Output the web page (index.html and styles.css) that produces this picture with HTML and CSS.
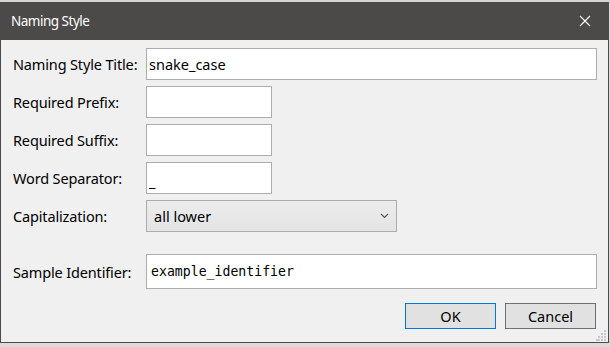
FILE: index.html
```html
<!DOCTYPE html>
<html>
<head>
<meta charset="utf-8">
<link rel="stylesheet" href="styles.css">
</head>
<body>
<div class="backdrop-top"></div>
<div class="dialog">
  <div class="titlebar">
    <span class="title">Naming Style</span>
    <svg class="close" width="12" height="12" viewBox="0 0 12 12"><path d="M1 1L11 11M11 1L1 11" stroke="#ffffff" stroke-width="1.1" fill="none"/></svg>
  </div>
  <div class="body">
    <div class="form">
      <label class="lbl">Naming Style Title:</label>
      <div class="field wide">snake_case</div>
      <label class="lbl">Required Prefix:</label>
      <div class="field short"></div>
      <label class="lbl">Required Suffix:</label>
      <div class="field short"></div>
      <label class="lbl">Word Separator:</label>
      <div class="field short sep">_</div>
      <label class="lbl">Capitalization:</label>
      <div class="combo"><span>all lower</span>
        <svg width="9" height="6" viewBox="0 0 9 6"><path d="M1 1L4.5 4.5L8 1" stroke="#555" stroke-width="1.1" fill="none"/></svg>
      </div>
    </div>
    <div class="form sample-row">
      <label class="lbl">Sample Identifier:</label>
      <div class="field wide mono">example_identifier</div>
    </div>
    <div class="buttons">
      <button class="btn default">OK</button>
      <button class="btn">Cancel</button>
    </div>
    <svg class="grip" width="11" height="11" viewBox="0 0 11 11">
      <g fill="#c8c8d0">
        <rect x="8" y="0" width="2" height="2"/>
        <rect x="5" y="3" width="2" height="2"/><rect x="8" y="3" width="2" height="2"/>
        <rect x="2" y="6" width="2" height="2"/><rect x="5" y="6" width="2" height="2"/><rect x="8" y="6" width="2" height="2"/>
        <rect x="0" y="9" width="2" height="2"/><rect x="2" y="9" width="2" height="2"/><rect x="5" y="9" width="2" height="2"/><rect x="8" y="9" width="2" height="2"/>
      </g>
    </svg>
  </div>
</div>
<div class="backdrop-bottom"></div>
</body>
</html>
```
FILE: styles.css
```css
html, body {
  margin: 0;
  padding: 0;
  width: 610px;
  height: 347px;
  overflow: hidden;
  background: #d9d9d9;
  font-family: "Noto Sans", "Open Sans", sans-serif;
}
.backdrop-top {
  height: 2px;
  background: #d4d4d4;
}
.dialog {
  width: 607px;
  border: 1px solid #4b4a48;
  border-top: none;
  background: #f0f0f0;
}
.titlebar {
  height: 38px;
  background: #4b4a48;
  display: flex;
  align-items: center;
  justify-content: space-between;
  padding: 0 17px 0 10px;
  color: #ffffff;
}
.title {
  font-size: 13.5px;
  letter-spacing: -0.5px;
}
.close {
  display: block;
}
.body {
  position: relative;
  height: 302px;
  padding: 8px 11px 0 12px;
  box-sizing: border-box;
}
.form {
  display: grid;
  grid-template-columns: 133px auto;
  row-gap: 6px;
  align-items: center;
  justify-items: start;
}
.lbl {
  font-size: 14.5px;
  color: #000;
  letter-spacing: -0.15px;
}
.field {
  height: 32px;
  box-sizing: border-box;
  border: 1px solid #adadad;
  background: #fff;
  font-size: 14.5px;
  color: #000;
  display: flex;
  align-items: center;
  padding-left: 2px;
}
.wide { width: 451px; }
.short { width: 126px; }
.sep { padding-top: 6px; }
.combo {
  width: 251px;
  height: 32px;
  box-sizing: border-box;
  border: 1px solid #acacac;
  background: linear-gradient(#ececec, #e4e4e4);
  display: flex;
  align-items: center;
  justify-content: space-between;
  padding: 0 7px 0 7px;
  font-size: 14.5px;
  color: #000;
}
.combo svg { display: block; }
.sample-row { margin-top: 22px; }
.sample-row .field { height: 35px; padding-left: 4px; }
.mono {
  font-family: "DejaVu Sans Mono", "Liberation Mono", monospace;
  font-size: 13.2px;
}
.buttons {
  display: flex;
  justify-content: flex-end;
  gap: 9px;
  margin-top: 14px;
  padding-right: 1px;
}
.btn {
  width: 91px;
  height: 26px;
  box-sizing: border-box;
  background: #e1e1e1;
  border: 1px solid #6f6f6f;
  font-family: "Noto Sans", "Open Sans", sans-serif;
  font-size: 14.5px;
  color: #000;
  padding: 0;
}
.btn.default {
  border-color: #0078d7;
}
.grip {
  position: absolute;
  right: 1px;
  bottom: 1px;
}
.backdrop-bottom {
  height: 4px;
  background: #dcdcdc;
}
```
